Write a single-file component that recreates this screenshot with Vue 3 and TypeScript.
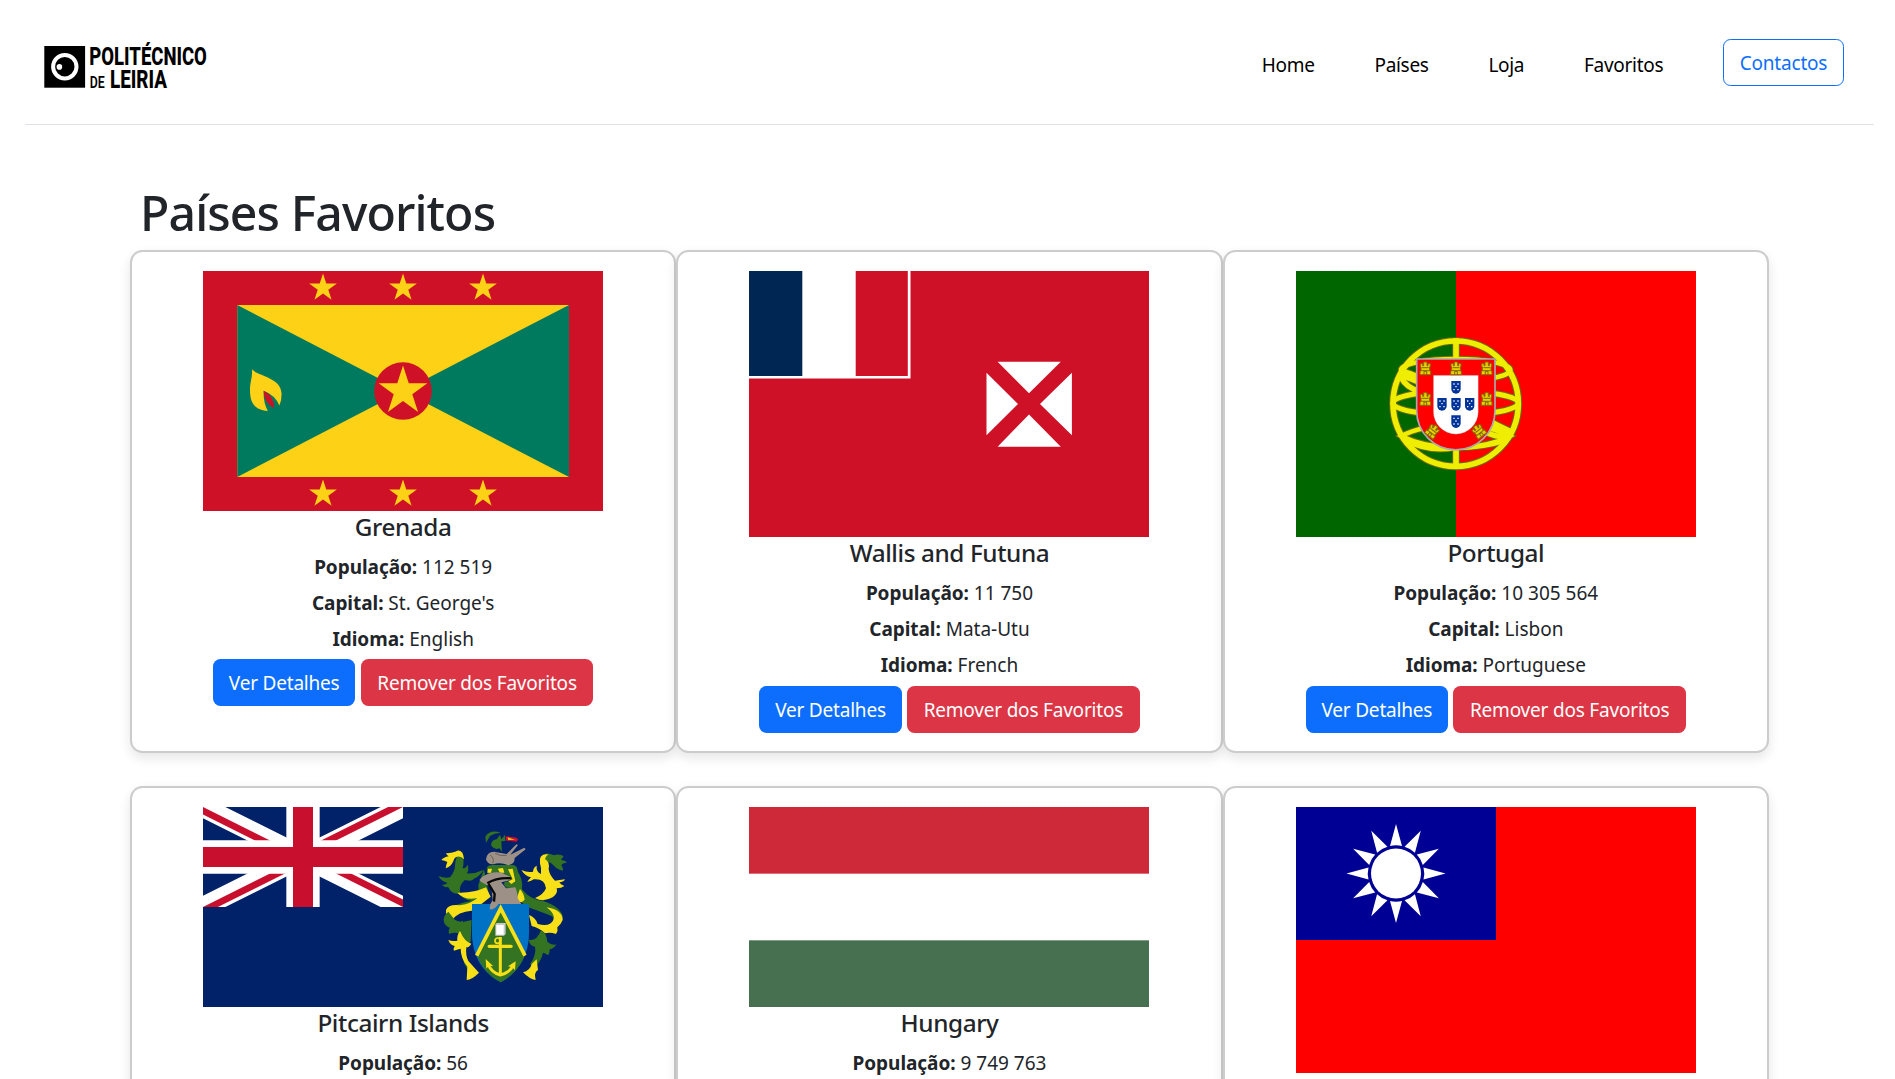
<script setup lang="ts">
interface Country {
  name: string
  code: string
  population: string
  capital: string
  language: string
  flagHeight: number
}

const links: string[] = ['Home', 'Países', 'Loja', 'Favoritos']

const countries: Country[] = [
  { name: 'Grenada', code: 'gd', population: '112 519', capital: "St. George's", language: 'English', flagHeight: 240 },
  { name: 'Wallis and Futuna', code: 'wf', population: '11 750', capital: 'Mata-Utu', language: 'French', flagHeight: 266.67 },
  { name: 'Portugal', code: 'pt', population: '10 305 564', capital: 'Lisbon', language: 'Portuguese', flagHeight: 266.67 },
  { name: 'Pitcairn Islands', code: 'pn', population: '56', capital: 'Adamstown', language: 'English', flagHeight: 200 },
  { name: 'Hungary', code: 'hu', population: '9 749 763', capital: 'Budapest', language: 'Hungarian', flagHeight: 200 },
  { name: 'Taiwan', code: 'tw', population: '23 503 349', capital: 'Taipei', language: 'Chinese', flagHeight: 266.67 },
]

/** Points of a five-pointed star centred on (cx, cy). */
function star(cx: number, cy: number, r: number): string {
  return Array.from({ length: 10 }, (_, i) => {
    const radius = i % 2 ? r * 0.382 : r
    const a = (Math.PI / 5) * i
    return `${(cx + radius * Math.sin(a)).toFixed(2)},${(cy - radius * Math.cos(a)).toFixed(2)}`
  }).join(' ')
}

const borderStars = [120, 200, 280].flatMap((x) => [star(x, 17, 14.6), star(x, 223, 14.6)])
const castles: [number, number, number][] = [
  [166, 145, 0], [258, 145, 0], [350, 145, 0], [166, 237, 0], [350, 237, 0], [188, 333, 38], [326, 333, -38],
]
const quinas: [number, number][] = [[258, 202], [216, 253], [258, 253], [299, 253], [258, 305]]
const rays = Array.from({ length: 12 }, (_, i) => i * 30)
</script>

<template>
  <header class="header">
    <svg class="logo" width="164" height="50" viewBox="44 41 164 50">
      <rect x="44.3" y="46" width="40.8" height="41.7" />
      <circle cx="64.8" cy="66.7" r="11.7" fill="none" stroke="#fff" stroke-width="4" />
      <circle cx="59.4" cy="66.9" r="2.8" fill="#fff" />
      <g class="logo-text">
        <text x="89.3" y="65.4" font-size="26.3" textLength="117.6" lengthAdjust="spacingAndGlyphs">POLITÉCNICO</text>
        <text x="89.8" y="87.7" font-size="17" textLength="15" lengthAdjust="spacingAndGlyphs" class="small">DE</text>
        <text x="110" y="87.7" font-size="26.3" textLength="57" lengthAdjust="spacingAndGlyphs">LEIRIA</text>
      </g>
    </svg>
    <nav class="nav">
      <a v-for="link in links" :key="link" class="nav-link">{{ link }}</a>
      <button class="btn btn-outline">Contactos</button>
    </nav>
  </header>

  <main class="container">
    <h1 class="title">Países Favoritos</h1>
    <div class="grid">
      <article v-for="c in countries" :key="c.code" class="card">
        <svg class="flag" width="400" :height="c.flagHeight" :viewBox="`0 0 400 ${c.flagHeight}`">
          <g v-if="c.code === 'gd'">
            <rect width="400" height="240" fill="#ce1126" />
            <rect x="34.3" y="34" width="331.7" height="172" fill="#fcd116" />
            <path d="M34.3 34L200 120L34.3 206ZM366 34L200 120L366 206Z" fill="#007a5e" />
            <polygon v-for="s in borderStars" :key="s" :points="s" fill="#fcd116" />
            <circle cx="200" cy="120" r="28.8" fill="#ce1126" />
            <polygon :points="star(200, 120.2, 25.6)" fill="#fcd116" />
            <path d="M49 98.3C54 105 78.6 106 78.6 123Q78.6 130 76.4 134.5Q72 124 60.7 119.7Q60 131 64.8 140C50 139 47 130 47 119C47 111 49.5 107 49 98.3Z" fill="#fcd116" />
            <path d="M60.7 119.7Q71.5 125 71 137.3Q60.5 131 60.7 119.7Z" fill="#ce1126" />
          </g>

          <g v-else-if="c.code === 'wf'">
            <rect width="400" height="267" fill="#ce1126" />
            <rect width="161.5" height="107.5" fill="#fff" />
            <rect width="53.3" height="105" fill="#002654" />
            <rect x="106.7" width="52.1" height="105" fill="#ce1126" />
            <path d="M248.6 90.7H311.8L280 122.3ZM248.6 175.7H311.8L280 143.5ZM237.5 101.7V164.3L269 132.9ZM322.9 101.7V164.3L291 132.9Z" fill="#fff" />
          </g>

          <g v-else-if="c.code === 'pt'">
            <rect width="400" height="267" fill="#f00" />
            <rect width="160" height="267" fill="#060" />
            <g transform="translate(74 49) scale(.33333)" fill="none">
              <g v-for="pass in [0, 1]" :key="pass" :stroke="pass ? '#f0ee00' : '#6b6a10'">
                <circle cx="257" cy="251" r="188" :stroke-width="pass ? 17 : 23" />
                <path d="M258 55V445" :stroke-width="pass ? 17 : 23" />
                <ellipse cx="257" cy="249" rx="188" ry="36" :stroke-width="pass ? 15 : 21" />
                <ellipse cx="257" cy="150" rx="164" ry="33" :stroke-width="pass ? 14 : 20" />
                <path d="M95 348Q150 318 257 312Q365 318 420 348Q365 379 257 384Q150 379 95 348Z" :stroke-width="pass ? 14 : 20" />
                <path d="M104 362Q180 400 257 384Q340 385 408 362" :stroke-width="pass ? 12 : 17" />
                <path d="M86 160Q150 168 257 250Q330 300 428 345" :stroke-width="pass ? 30 : 36" />
                <path d="M92 170Q110 205 150 214M345 335Q370 350 415 352" :stroke-width="pass ? 16 : 22" />
              </g>
              <path d="M140 117H375V272A117.5 117.5 0 0 1 140 272Z" fill="#f00" stroke="#aaa" stroke-width="5" />
              <path d="M190 166H325V275A67.5 67.5 0 0 1 190 275Z" fill="#fff" stroke="#b44" stroke-width="1" />
              <g v-for="([x, y], i) in quinas" :key="'q' + i" :transform="`translate(${x} ${y})`">
                <path d="M-14 -19H14V5A14 14 0 0 1 -14 5Z" fill="#039" />
                <path d="M-8 -10h4M4 -10h4M-2 -2h4M-8 7h4M4 7h4" stroke="#fff" stroke-width="4" />
              </g>
              <g v-for="([x, y, a], i) in castles" :key="'c' + i" :transform="`translate(${x} ${y}) rotate(${a})`">
                <path d="M-16 19V8H-13V-5H-15V-14H-8V-8H-5V-19H5V-8H8V-14H15V-5H13V8H16V19Z" fill="#e8cf00" stroke="#8a6a00" stroke-width="3" />
                <path d="M-4 19V9H4V19M-12 7H12M-10 -2H10" stroke="#806800" stroke-width="3" />
              </g>
            </g>
          </g>

          <g v-else-if="c.code === 'pn'">
            <rect width="400" height="200" fill="#012169" />
            <svg width="200" height="100" viewBox="0 0 60 30">
              <clipPath id="saltire"><path d="M30 15H60V30ZM30 15V30H0ZM30 15H0V0ZM30 15V0H60Z" /></clipPath>
              <path d="M0 0L60 30M60 0L0 30" stroke="#fff" stroke-width="6" />
              <path d="M0 0L60 30M60 0L0 30" stroke="#c8102e" stroke-width="4" clip-path="url(#saltire)" />
              <path d="M30 0V30M0 15H60" stroke="#fff" stroke-width="10" />
              <path d="M30 0V30M0 15H60" stroke="#c8102e" stroke-width="6" />
            </svg>
            <g transform="translate(197 -7) scale(.33333)">
              <!-- mantling, left -->
              <path d="M252 272Q215 290 172 277Q190 300 215 303Q140 315 138 350Q145 385 185 375Q178 360 150 358Q160 335 225 330L270 290Z" fill="#337321" />
              <path d="M252 208L268 290L216 303Q240 275 235 255Z" fill="#337321" />
              <path d="M187 155Q194 185 188 205Q198 205 203 194Q208 210 200 220Q225 222 250 210Q240 228 222 236Q215 246 195 240Q176 255 180 280Q155 285 145 262Q132 262 125 254Q138 254 142 248Q125 245 115 228Q135 236 150 232Q165 215 165 195Q165 170 187 155Z" fill="#337321" />
              <path d="M192 178Q190 150 172 152Q160 158 138 160Q140 166 146 169Q130 172 124 180Q134 181 142 186Q138 195 137 205Q153 200 160 184Q162 172 172 170Q184 168 192 178Z" fill="#f7e017" />
              <path d="M172 278Q220 280 258 262L272 290Q245 312 215 332Q175 335 155 360Q135 345 138 330Q145 312 180 316Q215 310 232 294Q195 303 172 278Z" fill="#f7e017" />
              <path d="M145 335Q125 350 133 370Q140 382 150 383Q143 392 148 402Q165 395 180 402Q195 395 200 380L188 362Q176 368 165 360Z" fill="#337321" />
              <path d="M192 365Q178 395 180 418Q205 440 196 475Q208 490 206 512L192 490Q185 440 212 425L215 360Z" fill="#337321" />
              <path d="M180 393Q170 405 172 422Q157 425 145 420Q150 435 164 438Q159 447 162 452Q175 447 182 446Q182 475 202 500L200 540Q215 540 237 518L205 483Q196 465 199 442Q208 442 214 431Q193 425 180 393Z" fill="#f7e017" />
              <!-- mantling, right -->
              <path d="M350 210Q370 235 366 268Q390 300 430 303Q480 320 488 348Q485 375 460 378Q470 360 455 348Q420 335 385 322L340 290L335 220Z" fill="#337321" />
              <path d="M428 165Q440 155 462 166Q477 160 491 168Q486 176 483 180Q496 181 501 188Q487 188 484 196Q490 204 489 212Q470 208 462 197L450 187Q438 190 425 180Z" fill="#337321" />
              <path d="M445 163Q415 160 420 190Q425 205 423 222Q408 215 410 197Q400 202 399 215Q382 218 364 210Q375 228 393 232Q385 240 382 246Q395 243 401 238Q435 235 438 265Q430 285 405 294Q430 308 458 292Q475 280 470 265Q485 265 493 258Q481 253 478 247Q492 246 495 238Q478 240 465 242Q448 225 446 207Q450 185 435 177Q438 168 445 163Z" fill="#f7e017" />
              <path d="M360 267Q372 280 374 299Q360 314 348 300ZM440 322Q488 330 488 360Q482 375 472 382Q475 392 468 402Q450 395 435 400Q420 385 395 378L387 345Q407 352 413 372Q450 382 460 360Q468 344 440 322Z" fill="#f7e017" />
              <path d="M423 390Q440 400 442 425Q455 437 469 433Q462 447 449 448Q450 458 445 466Q434 458 429 458Q424 484 404 500L390 492Q410 465 405 440Q390 438 386 420Q412 423 423 390Z" fill="#337321" />
              <path d="M410 478L414 510Q401 517 407 540Q389 538 369 517Q390 512 395 492Z" fill="#f7e017" />
              <!-- shield -->
              <path d="M216 312H387V400C387 470 350 522 302 547C252 522 216 470 216 400Z" fill="#0072c6" />
              <path d="M302 328L376 464Q352 520 302 547Q250 520 230 464Z" fill="#337321" />
              <path d="M230 467L302 325L375 467" fill="none" stroke="#f7e017" stroke-width="11" />
              <path d="M286 373L290 369H317V402L312 407H286Z" fill="#c9c9cd" />
              <rect x="289" y="375" width="22" height="29" fill="#fff" />
              <g fill="none" stroke="#f7e017">
                <circle cx="293" cy="422" r="8" stroke-width="5" />
                <path d="M301 411V524" stroke-width="9" />
                <path d="M268 439H333" stroke-width="10" stroke-linecap="round" />
                <path d="M264 492Q274 518 301 525Q330 518 341 494" stroke-width="9" />
              </g>
              <path d="M257 477L259 506L267 497L280 499ZM347 484L345 511L337 502L324 499Z" fill="#f7e017" />
              <!-- helmet, wreath and wheelbarrow -->
              <path d="M260 205Q262 195 278 195H340Q355 197 353 222L346 263H320Q307 255 315 245L332 244Q330 230 315 221H263Z" fill="#337321" />
              <path d="M264 206H276L273 218H262ZM293 206L309 204L313 218H300ZM324 208L338 206L346 244L334 252L325 244L338 238Z" fill="#f7e017" />
              <path d="M238 240Q262 212 306 218L334 232L333 240L304 247L318 265L346 262Q354 280 353 295L364 312H308L295 312Q285 330 270 328Q267 315 278 300L274 260Q245 250 238 240Z" fill="#9d9086" />
              <path d="M262 250Q290 232 334 235M266 252L284 282L282 305" fill="none" stroke="#080808" stroke-width="7" />
              <path d="M258 178Q260 156 282 155L320 162L349 133L354 135L331 164L373 143L377 148L344 174Q345 192 325 196Q300 185 280 193Q262 194 258 178Z" fill="#9d9086" />
              <path d="M270 165Q285 175 278 190M285 160Q300 170 320 166" fill="none" stroke="#554d47" stroke-width="2" />
              <path d="M302 98Q270 88 256 110L258 129L270 108Q283 99 302 98ZM300 104L304 118L315 104L316 123L304 124L306 155L298 145Q283 151 273 136Q274 120 290 118Z" fill="#337321" />
              <path d="M317 109L350 113L354 119L350 125L318 122Z" fill="#d0102e" />
              <path d="M323 112L345 119L325 120Z" fill="#f7c017" />
            </g>
          </g>

          <g v-else-if="c.code === 'hu'">
            <rect width="400" height="200" fill="#fff" />
            <rect width="400" height="66.67" fill="#ce2939" />
            <rect y="133.33" width="400" height="66.67" fill="#477050" />
          </g>

          <g v-else>
            <rect width="400" height="267" fill="#f00" />
            <rect width="200" height="133" fill="#000095" />
            <g transform="translate(100 66.5)" fill="#fff">
              <circle r="25" />
              <path v-for="a in rays" :key="a" d="M0 -49.5L6 -27.5Q0 -29 -6 -27.5Z" :transform="`rotate(${a})`" />
            </g>
          </g>
        </svg>

        <h5 class="name">{{ c.name }}</h5>
        <p class="info"><strong>População:</strong> {{ c.population }}</p>
        <p class="info"><strong>Capital:</strong> {{ c.capital }}</p>
        <p class="info"><strong>Idioma:</strong> {{ c.language }}</p>
        <div class="actions">
          <button class="btn btn-primary">Ver Detalhes</button>
          <button class="btn btn-danger">Remover dos Favoritos</button>
        </div>
      </article>
    </div>
  </main>
</template>

<style>
body {
  margin: 0;
  background: #fff;
}

#app {
  height: 1079px;
  overflow: hidden;
}
</style>

<style scoped>
.header,
.container {
  box-sizing: border-box;
  font-family: 'Segoe UI', 'Noto Sans', sans-serif;
  color: #212529;
}

.header {
  display: flex;
  justify-content: space-between;
  align-items: flex-start;
  height: 125px;
  margin: 0 21px 0 25px;
  padding: 39px 30px 0 19px;
  border-bottom: 1px solid #dee2e6;
}

.logo {
  display: block;
  margin-top: 2px;
}

.logo-text {
  font-family: Roboto, sans-serif;
  font-weight: 800;
}

.logo-text .small {
  font-weight: 600;
}

.nav {
  display: flex;
  align-items: flex-start;
  gap: 59.8px;
}

.nav-link {
  padding-top: 10px;
  font-size: 19px;
  line-height: 32px;
  letter-spacing: -0.3px;
  color: #000;
}

.btn {
  box-sizing: border-box;
  height: 47px;
  padding: 2px 0 0;
  border: 1px solid transparent;
  border-radius: 7.5px;
  font-family: inherit;
  font-size: 19px;
  line-height: 43px;
  letter-spacing: -0.2px;
  text-align: center;
  white-space: nowrap;
  color: #fff;
}

.btn-outline {
  width: 121px;
  border-color: #0d6efd;
  background: transparent;
  color: #0d6efd;
}

.btn-primary {
  width: 142.3px;
  background: #0d6efd;
}

.btn-danger {
  width: 232.5px;
  background: #dc3545;
}

.container {
  width: 1639px;
  margin: 54.5px 0 0 130px;
}

.title {
  height: 60px;
  margin: 0 0 10.5px;
  padding-left: 10px;
  font-size: 48.2px;
  font-weight: 500;
  line-height: 64px;
  letter-spacing: -0.9px;
}

.grid {
  display: grid;
  grid-template-columns: repeat(3, 1fr);
  row-gap: 33.2px;
}

.card {
  display: flex;
  flex-direction: column;
  align-items: center;
  padding: 18.75px 0 17.5px;
  border: 2px solid #ccc;
  border-radius: 12.5px;
  background: #fff;
  box-shadow: 0 5px 12px rgba(0, 0, 0, 0.1);
}

.flag {
  display: block;
}

.name {
  height: 30px;
  margin: 0 0 10px;
  font-size: 24.3px;
  font-weight: 500;
  line-height: 32px;
  letter-spacing: -0.4px;
}

.info {
  height: 30px;
  margin: 0 0 6px;
  font-size: 19px;
  font-weight: 370;
  line-height: 32px;
}

.info strong {
  font-weight: 700;
  letter-spacing: -0.05px;
}

.actions {
  display: flex;
  gap: 5.5px;
  height: 47.5px;
  padding-top: 0.4px;
}
</style>
